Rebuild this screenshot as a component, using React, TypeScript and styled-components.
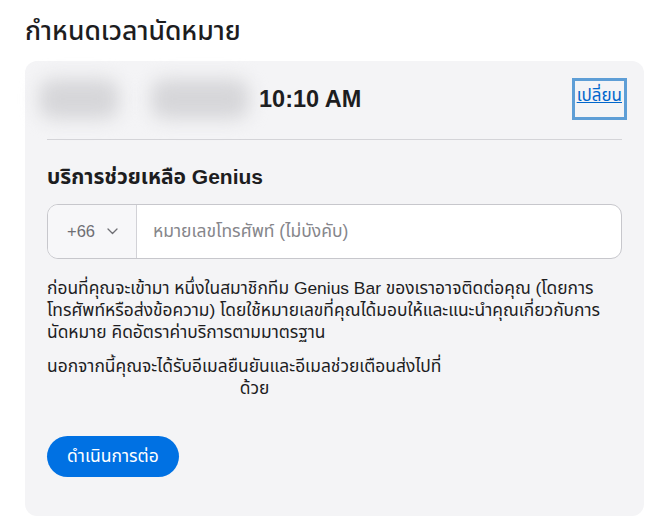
import * as React from 'react';
import styled, { createGlobalStyle } from 'styled-components';

const GlobalStyle = createGlobalStyle`
  body {
    margin: 0;
    background: #ffffff;
    color: #1d1d1f;
    font-family: "Liberation Sans", "Noto Sans Thai", "Noto Sans Thai Looped", "Noto Sans", sans-serif;
  }
`;

const Page = styled.div`
  padding: 13px 11px 12px 25px;
`;

const Title = styled.h1`
  margin: 0 0 12px;
  font-size: 26.5px;
  font-weight: 500;
  line-height: 36px;
`;

const Card = styled.section`
  background: #f4f4f6;
  border-radius: 12px;
  padding: 18px 22px 39px 22px;
`;

const DateRow = styled.div`
  display: flex;
  align-items: center;
  padding: 0 0 20px 0;
  border-bottom: 1px solid #d4d4d8;
`;

const Blur = styled.span<{ $w: number; $ml: number }>`
  display: inline-block;
  width: ${({ $w }) => $w}px;
  height: 40px;
  margin-left: ${({ $ml }) => $ml}px;
  background: #d6d6d9;
  border-radius: 14px;
  filter: blur(9px);
`;

const Time = styled.span`
  margin-left: 10px;
  font-size: 23.5px;
  font-weight: 700;
`;

const ChangeLink = styled.a`
  margin-left: auto;
  margin-right: -2px;
  padding: 2px 2px 8px;
  font-size: 17px;
  color: #06c;
  text-decoration: underline;
  outline: 3px solid #5e9ed6;
`;

const SectionTitle = styled.h2`
  margin: 22px 0 12px;
  font-size: 21px;
  font-weight: 700;
  line-height: 30px;
`;

const PhoneField = styled.div`
  display: flex;
  height: 53px;
  border: 1px solid #c7c7cc;
  border-radius: 11px;
  overflow: hidden;
  background: #fff;
`;

const CountrySelect = styled.div`
  display: flex;
  align-items: center;
  gap: 12px;
  width: 89px;
  padding-left: 19px;
  box-sizing: border-box;
  background: #f7f7f9;
  border-right: 1px solid #d2d2d7;
  color: #6e6e73;
  font-size: 16.5px;
`;

const PhoneInput = styled.input`
  flex: 1;
  border: none;
  outline: none;
  padding: 0 16px;
  font: inherit;
  font-size: 17.5px;
  color: #1d1d1f;
  background: transparent;

  &::placeholder {
    color: #86868b;
  }
`;

const Paragraph = styled.p`
  margin: 0;
  padding-right: 8px;
  font-size: 17.4px;
  line-height: 22px;
`;

const Notice = styled(Paragraph)`
  margin: 18px 0 12px;
`;

const EmailGap = styled.span`
  display: inline-block;
  width: 188px;
`;

const ContinueButton = styled.button`
  margin-top: 37px;
  height: 41px;
  padding: 0 20px;
  border: none;
  border-radius: 21px;
  background: #0071e3;
  color: #fff;
  font: inherit;
  font-size: 17.5px;
  cursor: pointer;
`;

function Chevron() {
  return (
    <svg width="11" height="7" viewBox="0 0 11 7" fill="none">
      <path d="M1 1l4.5 4.5L10 1" stroke="#6e6e73" strokeWidth="1.3" strokeLinecap="round" strokeLinejoin="round" />
    </svg>
  );
}

export default function App(): React.ReactElement {
  return (
    <>
      <GlobalStyle />
      <Page>
        <Title>กำหนดเวลานัดหมาย</Title>
        <Card>
          <DateRow>
            <Blur $w={80} $ml={-8} />
            <Blur $w={98} $ml={32} />
            <Time>10:10 AM</Time>
            <ChangeLink href="#">เปลี่ยน</ChangeLink>
          </DateRow>

          <SectionTitle>บริการช่วยเหลือ Genius</SectionTitle>

          <PhoneField>
            <CountrySelect>
              +66 <Chevron />
            </CountrySelect>
            <PhoneInput placeholder="หมายเลขโทรศัพท์ (ไม่บังคับ)" />
          </PhoneField>

          <Notice>
            ก่อนที่คุณจะเข้ามา หนึ่งในสมาชิกทีม Genius Bar ของเราอาจติดต่อคุณ (โดยการโทรศัพท์หรือส่งข้อความ)
            โดยใช้หมายเลขที่คุณได้มอบให้และแนะนำคุณเกี่ยวกับการนัดหมาย คิดอัตราค่าบริการตามมาตรฐาน
          </Notice>
          <Paragraph>
            นอกจากนี้คุณจะได้รับอีเมลยืนยันและอีเมลช่วยเตือนส่งไปที่ <EmailGap /> ด้วย
          </Paragraph>

          <ContinueButton>ดำเนินการต่อ</ContinueButton>
        </Card>
      </Page>
    </>
  );
}
